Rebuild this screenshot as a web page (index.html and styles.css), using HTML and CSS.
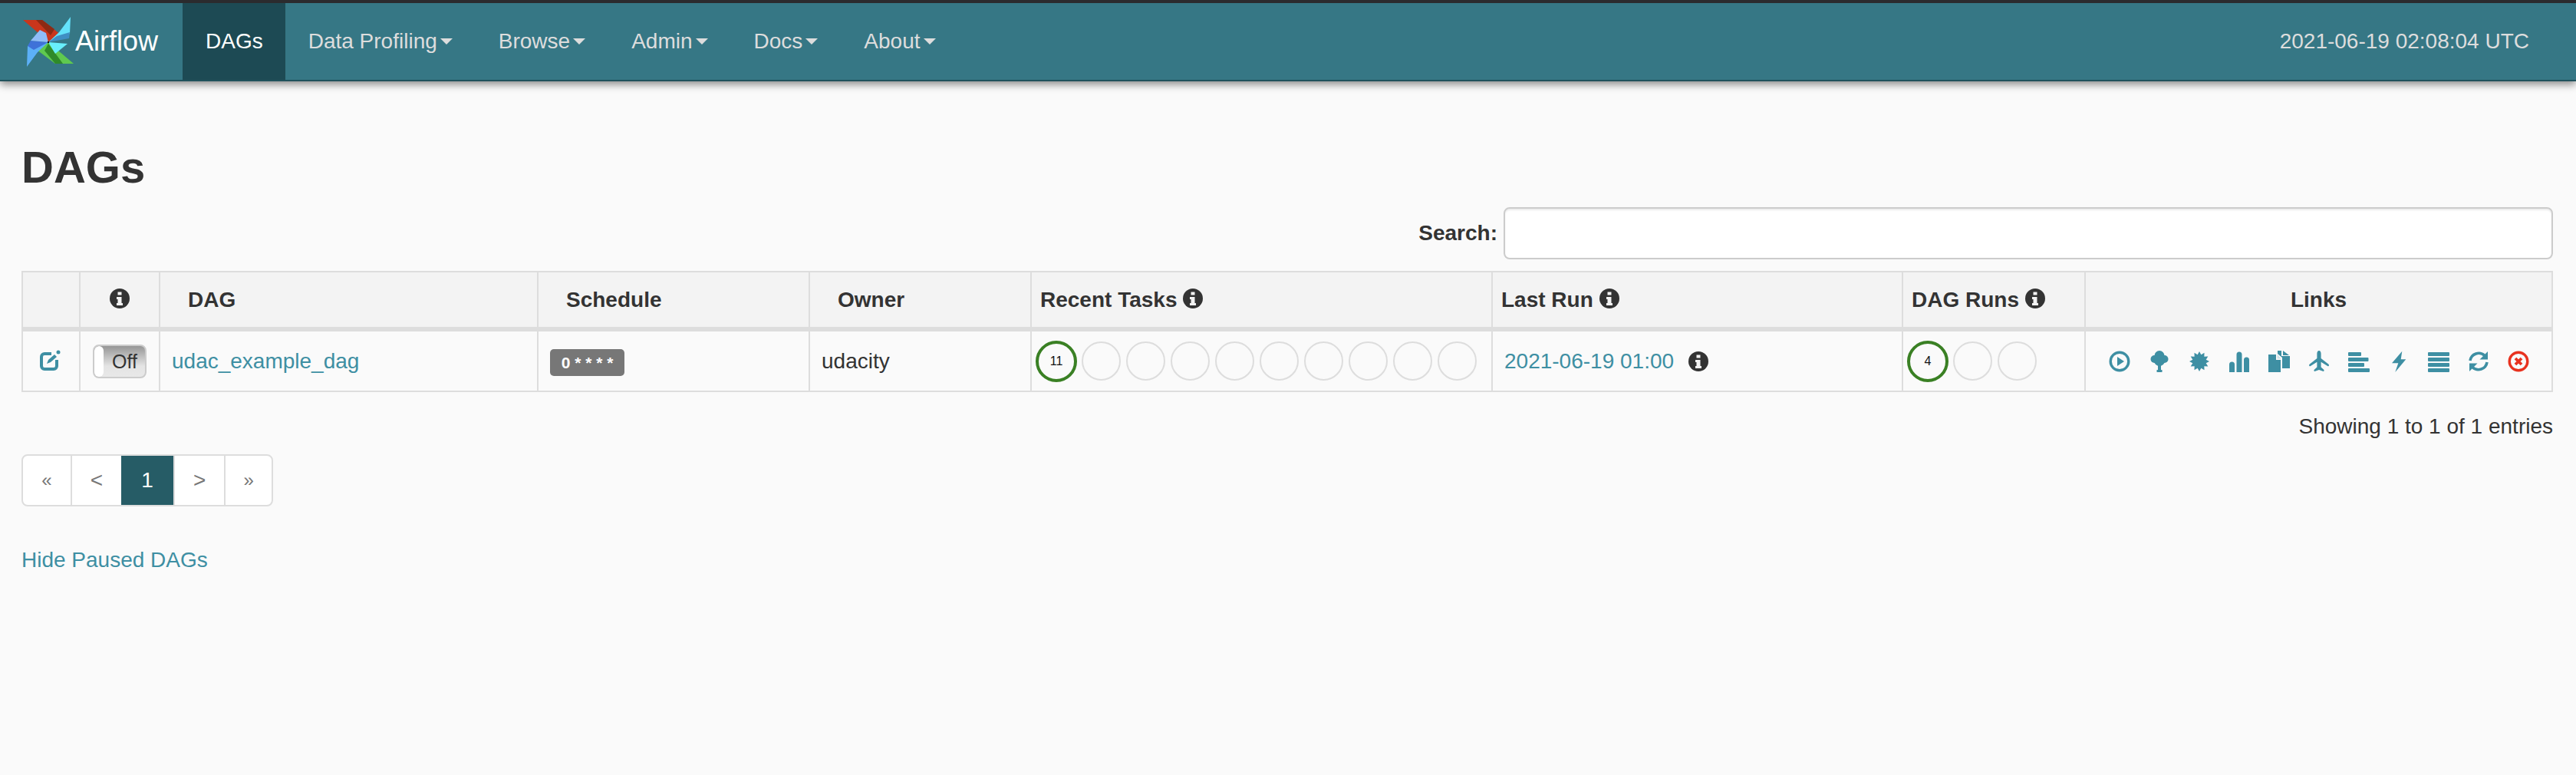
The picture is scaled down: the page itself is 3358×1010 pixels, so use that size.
FILE: index.html
```html
<!DOCTYPE html>
<html lang="en">
<head>
    <meta charset="UTF-8">
    <title>Airflow - DAGs</title>
    <link rel="stylesheet" href="styles.css">
</head>
<body>
    <!-- top bar -->
    <nav class="navbar">
        <a class="brand">
            <svg class="logo" viewBox="30 22 66 66">
                <polygon points="30,26 55,26 79,45 64,55" fill="#c9361c"/>
                <polygon points="47,26 55,26 71,38 66,46" fill="#8e2a14"/>
                <polygon points="92,22 91,44 63,55 77,42" fill="#64e2fb"/>
                <polygon points="91,42 90,50 63,55 74,47" fill="#3f8fc4"/>
                <polygon points="96,83 72,83 48,65 63,55" fill="#5fc94f"/>
                <polygon points="82,83 72,83 58,66 63,57" fill="#2f8a2a"/>
                <polygon points="35,87 36,60 63,55 49,68" fill="#5cb0f7"/>
                <polygon points="36,60 40,53 63,55 44,65" fill="#3f72d8"/>
                <polygon points="52,39 40,53 63,55 60,43" fill="#8fbdf8"/>
                <polygon points="88,57 72,70 63,55" fill="#68effb"/>
                <circle cx="63" cy="55" r="1.2" fill="#111"/>
            </svg>
            <span class="brand-name">Airflow</span>
        </a>
        <ul class="nav-list">
            <li class="nav-item active">DAGs</li>
            <li class="nav-item">Data Profiling<span class="caret"></span></li>
            <li class="nav-item">Browse<span class="caret"></span></li>
            <li class="nav-item">Admin<span class="caret"></span></li>
            <li class="nav-item">Docs<span class="caret"></span></li>
            <li class="nav-item">About<span class="caret"></span></li>
        </ul>
        <div class="clock">2021-06-19 02:08:04 UTC</div>
    </nav>

    <main class="container">
        <h2 class="title">DAGs</h2>

        <div class="search-row">
            <label class="search-label" for="search">Search:</label>
            <input class="search-input" id="search" type="search">
        </div>

        <table class="dag-table">
            <colgroup>
                <col class="c-edit"><col class="c-toggle"><col class="c-dag"><col class="c-sched"><col class="c-owner">
                <col class="c-tasks"><col class="c-last"><col class="c-runs"><col class="c-links">
            </colgroup>
            <thead>
                <tr>
                    <th></th>
                    <th class="center"><svg class="info" viewBox="0 0 26 26"><circle cx="13" cy="13" r="13"/><rect class="info-i" x="10.500" y="4.500" width="5" height="4"/><path class="info-i" d="M9 11h6.500v8H17v3H9v-3h1.500v-5H9z"/></svg></th>
                    <th class="pad-wide">DAG</th>
                    <th class="pad-wide">Schedule</th>
                    <th class="pad-wide">Owner</th>
                    <th class="pad-small">Recent Tasks <svg class="info" viewBox="0 0 26 26"><circle cx="13" cy="13" r="13"/><rect class="info-i" x="10.500" y="4.500" width="5" height="4"/><path class="info-i" d="M9 11h6.500v8H17v3H9v-3h1.500v-5H9z"/></svg></th>
                    <th class="pad-small">Last Run <svg class="info" viewBox="0 0 26 26"><circle cx="13" cy="13" r="13"/><rect class="info-i" x="10.500" y="4.500" width="5" height="4"/><path class="info-i" d="M9 11h6.500v8H17v3H9v-3h1.500v-5H9z"/></svg></th>
                    <th class="pad-small">DAG Runs <svg class="info" viewBox="0 0 26 26"><circle cx="13" cy="13" r="13"/><rect class="info-i" x="10.500" y="4.500" width="5" height="4"/><path class="info-i" d="M9 11h6.500v8H17v3H9v-3h1.500v-5H9z"/></svg></th>
                    <th class="center">Links</th>
                </tr>
            </thead>
            <tbody>
                <tr>
                    <td class="center">
                        <svg class="edit-icon" viewBox="0 0 29 27">
                            <path d="M17 5H8a4 4 0 0 0-4 4v12a4 4 0 0 0 4 4h12a4 4 0 0 0 4-4v-8" fill="none" stroke-width="4"/>
                            <path d="M11 18l2-5 8-7 3 3-8 7z"/>
                            <circle cx="26" cy="3" r="2.500"/>
                        </svg>
                    </td>
                    <td class="toggle-cell">
                        <div class="toggle"><span class="toggle-handle"></span><span class="toggle-text">Off</span></div>
                    </td>
                    <td><a class="link">udac_example_dag</a></td>
                    <td><span class="badge">0 * * * *</span></td>
                    <td>udacity</td>
                    <td class="dots-cell">
                        <div class="dots">
                            <span class="dot-box"><span class="dot dot-ok">11</span></span>
                            <span class="dot-box"><span class="dot"></span></span>
                            <span class="dot-box"><span class="dot"></span></span>
                            <span class="dot-box"><span class="dot"></span></span>
                            <span class="dot-box"><span class="dot"></span></span>
                            <span class="dot-box"><span class="dot"></span></span>
                            <span class="dot-box"><span class="dot"></span></span>
                            <span class="dot-box"><span class="dot"></span></span>
                            <span class="dot-box"><span class="dot"></span></span>
                            <span class="dot-box"><span class="dot"></span></span>
                        </div>
                    </td>
                    <td>
                        <a class="link">2021-06-19 01:00</a>
                        <svg class="info info-last" viewBox="0 0 26 26"><circle cx="13" cy="13" r="13"/><rect class="info-i" x="10.500" y="4.500" width="5" height="4"/><path class="info-i" d="M9 11h6.500v8H17v3H9v-3h1.500v-5H9z"/></svg>
                    </td>
                    <td class="dots-cell">
                        <div class="dots">
                            <span class="dot-box"><span class="dot dot-ok">4</span></span>
                            <span class="dot-box"><span class="dot"></span></span>
                            <span class="dot-box"><span class="dot"></span></span>
                        </div>
                    </td>
                    <td class="links-cell">
                        <div class="icons">
                            <!-- play -->
                            <svg class="icon" viewBox="0 0 28 28"><circle cx="14" cy="14" r="11.800" fill="none" stroke="#3e8fa3" stroke-width="3.400"/><polygon points="11,8 20,14 11,20"/></svg>
                            <!-- tree -->
                            <svg class="icon" viewBox="0 0 28 28"><circle cx="14" cy="6.500" r="6.500"/><circle cx="7.500" cy="11" r="5"/><circle cx="20.500" cy="11" r="5"/><circle cx="14" cy="13" r="7"/><rect x="12" y="15" width="4" height="11"/><rect x="10.500" y="25" width="7" height="3"/></svg>
                            <!-- burst -->
                            <svg class="icon" viewBox="0 0 28 28"><polygon points="14,1 16.330,5.310 20.500,2.700 20.360,7.640 25.300,7.500 22.690,11.670 27,14 22.690,16.330 25.300,20.500 20.360,20.360 20.500,25.300 16.330,22.690 14,27 11.670,22.690 7.500,25.300 7.640,20.360 2.700,20.500 5.310,16.330 1,14 5.310,11.670 2.700,7.500 7.640,7.640 7.500,2.700 11.670,5.310"/></svg>
                            <!-- chart -->
                            <svg class="icon" viewBox="0 0 28 28"><path d="M1 28V18a3.500 3.500 0 0 1 7 0v10zM10.500 28V5a3.500 3.500 0 0 1 7 0v23zM20 28V12a3.500 3.500 0 0 1 7 0v16z"/></svg>
                            <!-- files -->
                            <svg class="icon" viewBox="0 0 28 28"><path d="M12 0h5v7h11v16H18V9l-6-5z"/><path d="M19 0l8 6h-8z"/><path d="M0 5h10v7h6v16H0z"/><path class="icon-cut" d="M11.500 5l5 5.500h-5z"/></svg>
                            <!-- plane -->
                            <svg class="icon" viewBox="0 0 28 28"><path d="M14 0c1.800 0 2.600 2 2.600 4v6l9.600 7.400c.9.7 1 1.800.4 2.600-.4.400-1 .3-1.500-.1l-8.500-5.100v6.600l3.600 3.400c.5.5.5 1.300 0 1.900-.3.3-.8.3-1.200.1L14 25l-5 1.800c-.4.2-.9.2-1.200-.1-.5-.6-.5-1.400 0-1.900l3.600-3.400v-6.600L3 19.900c-.5.400-1.100.5-1.500.1-.6-.8-.5-1.900.4-2.600L11.400 10V4C11.400 2 12.200 0 14 0z"/></svg>
                            <!-- gantt -->
                            <svg class="icon" viewBox="0 0 28 28"><rect y="2" width="17" height="5" rx="1"/><rect y="9" width="26.500" height="5" rx="1"/><rect y="16" width="21" height="5" rx="1"/><rect y="23" width="28" height="5" rx="1"/></svg>
                            <!-- flash -->
                            <svg class="icon" viewBox="0 0 28 28"><polygon points="18.300,0.700 5,16.300 13.300,16.300 9.300,28 23.300,11.300 16.700,11.300"/></svg>
                            <!-- list -->
                            <svg class="icon" viewBox="0 0 28 28"><rect y="2" width="28" height="5" rx="1"/><rect y="9" width="28" height="5" rx="1"/><rect y="16" width="28" height="5" rx="1"/><rect y="23" width="28" height="5" rx="1"/></svg>
                            <!-- refresh -->
                            <svg class="icon" viewBox="0 0 28 28"><path d="M3 13A11.300 11.300 0 0 1 22 6.500" fill="none" stroke="#3e8fa3" stroke-width="3.600"/><polygon points="26,1 26,11.500 15.500,11.500"/><path d="M25 15A11.300 11.300 0 0 1 6 21.500" fill="none" stroke="#3e8fa3" stroke-width="3.600"/><polygon points="2,27 2,16.500 12.500,16.500"/></svg>
                            <!-- delete -->
                            <svg class="icon" viewBox="0 0 28 28"><circle cx="14" cy="14" r="11.800" fill="none" stroke="#e8321f" stroke-width="3.400"/><path d="M10 10l8 8M18 10l-8 8" fill="none" stroke="#e8321f" stroke-width="3.800"/></svg>
                        </div>
                    </td>
                </tr>
            </tbody>
        </table>

        <div class="info-row">Showing 1 to 1 of 1 entries</div>

        <ul class="pagination">
            <li class="page page-end page-small">«</li>
            <li class="page page-step">&lt;</li>
            <li class="page page-cur">1</li>
            <li class="page page-step">&gt;</li>
            <li class="page page-end page-small">»</li>
        </ul>

        <div class="paused-row"><a class="link">Hide Paused DAGs</a></div>
    </main>
</body>
</html>
```

FILE: styles.css
```css
* {
    box-sizing: border-box;
}

body {
    margin: 0;
    min-height: 1010px;
    background-color: #fafafa;
    color: #333;
    font-family: "Liberation Sans", Arial, sans-serif;
    font-size: 28px;
    line-height: 40px;
}

/* top bar */
.navbar {
    display: flex;
    align-items: stretch;
    height: 106px;
    padding-left: 30px;
    padding-right: 61px;
    background-color: #367785;
    border-top: 4px solid #2b2b2e;
    border-bottom: 2px solid #20525c;
    box-shadow: 0 4px 10px rgba(0, 0, 0, 0.45);
}
.brand {
    display: flex;
    align-items: center;
    width: 208px;
    color: #fff;
}
.logo {
    width: 66px;
    height: 66px;
    margin-top: 2px;
}
.brand-name {
    margin-left: 2px;
    font-size: 36px;
}
.nav-list {
    display: flex;
    flex: 1;
    margin: 0;
    padding: 0;
    list-style: none;
}
.nav-item {
    display: flex;
    align-items: center;
    padding: 0 30px;
    color: #ddd;
}
.nav-item.active {
    padding: 0 29px 0 30px;
    background-color: #1d4a54;
    color: #fff;
}
.caret {
    width: 0;
    height: 0;
    margin-left: 4px;
    border-top: 8px solid #ddd;
    border-left: 8px solid transparent;
    border-right: 8px solid transparent;
}
.clock {
    display: flex;
    align-items: center;
    color: #ddd;
}

/* page body */
.container {
    padding: 0 30px 0 28px;
}
.title {
    margin: 79px 0 19px;
    font-size: 58px;
    font-weight: bold;
    line-height: 66px;
}
.search-row {
    display: flex;
    align-items: center;
    justify-content: flex-end;
    gap: 8px;
    margin-bottom: 15px;
}
.search-label {
    font-weight: bold;
}
.search-input {
    width: 1368px;
    height: 68px;
    background: #fff;
    border: 2px solid #ccc;
    border-radius: 8px;
    box-shadow: inset 0 2px 2px rgba(0, 0, 0, 0.08);
}

/* table */
.dag-table {
    width: 3298px;
    table-layout: fixed;
    border-collapse: collapse;
}
.c-edit { width: 75px; }
.c-toggle { width: 104px; }
.c-dag { width: 493px; }
.c-sched { width: 354px; }
.c-owner { width: 289px; }
.c-tasks { width: 601px; }
.c-last { width: 535px; }
.c-runs { width: 238px; }
.c-links { width: 609px; }

.dag-table th,
.dag-table td {
    padding: 0 15px;
    border: 2px solid #ddd;
    white-space: nowrap;
    vertical-align: middle;
}
.dag-table th {
    height: 75px;
    background-color: #f3f3f3;
    border-bottom-width: 6px;
    text-align: left;
    font-weight: bold;
}
.dag-table td {
    height: 81px;
}
.dag-table .center {
    padding: 0;
    text-align: center;
}
.dag-table .pad-wide {
    padding-left: 36px;
}
.dag-table .pad-small {
    padding-left: 11px;
}
.info {
    width: 26px;
    height: 26px;
    fill: #333;
    vertical-align: -2px;
}
.info-i {
    fill: #f3f3f3;
}
.info-last {
    margin-left: 11px;
    vertical-align: -4px;
}
.link {
    color: #3e8fa3;
}
.edit-icon {
    display: block;
    width: 29px;
    height: 27px;
    margin: -3px auto 0 20px;
    fill: #3e8fa3;
    stroke: #3e8fa3;
    stroke-width: 0;
}
.edit-icon path:first-child {
    stroke-width: 4;
}

/* on/off switch */
.dag-table .toggle-cell {
    padding: 0 0 0 16px;
}
.toggle {
    display: flex;
    align-items: center;
    width: 70px;
    height: 44px;
    overflow: hidden;
    background: linear-gradient(#969696, #e4e4e4 65%, #e8e8e8);
    border: 2px solid #ccc;
    border-radius: 8px;
    color: #333;
    font-size: 25px;
}
.toggle-handle {
    width: 12px;
    height: 100%;
    background-color: #fff;
    border-radius: 6px;
}
.toggle-text {
    margin-left: 11px;
}

.badge {
    display: inline-block;
    width: 97px;
    height: 35px;
    background-color: #777;
    border-radius: 5px;
    color: #fff;
    font-size: 21px;
    font-weight: bold;
    line-height: 35px;
    text-align: center;
}

/* status circles */
.dag-table .dots-cell {
    padding: 0 0 0 3px;
}
.dots {
    display: flex;
}
.dot-box {
    display: flex;
    align-items: center;
    justify-content: center;
    width: 58px;
    height: 54px;
}
.dot {
    display: flex;
    align-items: center;
    justify-content: center;
    width: 51px;
    height: 51px;
    border: 2px solid #ddd;
    border-radius: 50%;
    color: #111;
    font-size: 16px;
}
.dot-ok {
    width: 54px;
    height: 54px;
    border: 4px solid #3a8024;
}

/* links column */
.dag-table .links-cell {
    padding: 0 0 0 30px;
}
.icons {
    display: flex;
    gap: 24px;
}
.icon {
    width: 28px;
    height: 28px;
    fill: #3e8fa3;
}
.icon-cut {
    fill: #cfe3e8;
}

.info-row {
    margin-top: 25px;
    text-align: right;
}

/* pager */
.pagination {
    display: flex;
    width: 328px;
    height: 68px;
    margin: 16px 0 50px;
    padding: 0;
    overflow: hidden;
    background-color: #fff;
    border: 2px solid #ddd;
    border-radius: 8px;
    list-style: none;
    color: #777;
}
.page {
    display: flex;
    align-items: center;
    justify-content: center;
    border-left: 2px solid #ddd;
}
.page:first-child {
    border-left: 0;
}
.page-end {
    width: 62px;
}
.page-step {
    width: 67px;
}
.page-small {
    font-size: 24px;
}
.page-cur {
    width: 68px;
    height: 68px;
    margin: -2px 0;
    background-color: #265c66;
    border-left: 0;
    color: #fff;
}
```
